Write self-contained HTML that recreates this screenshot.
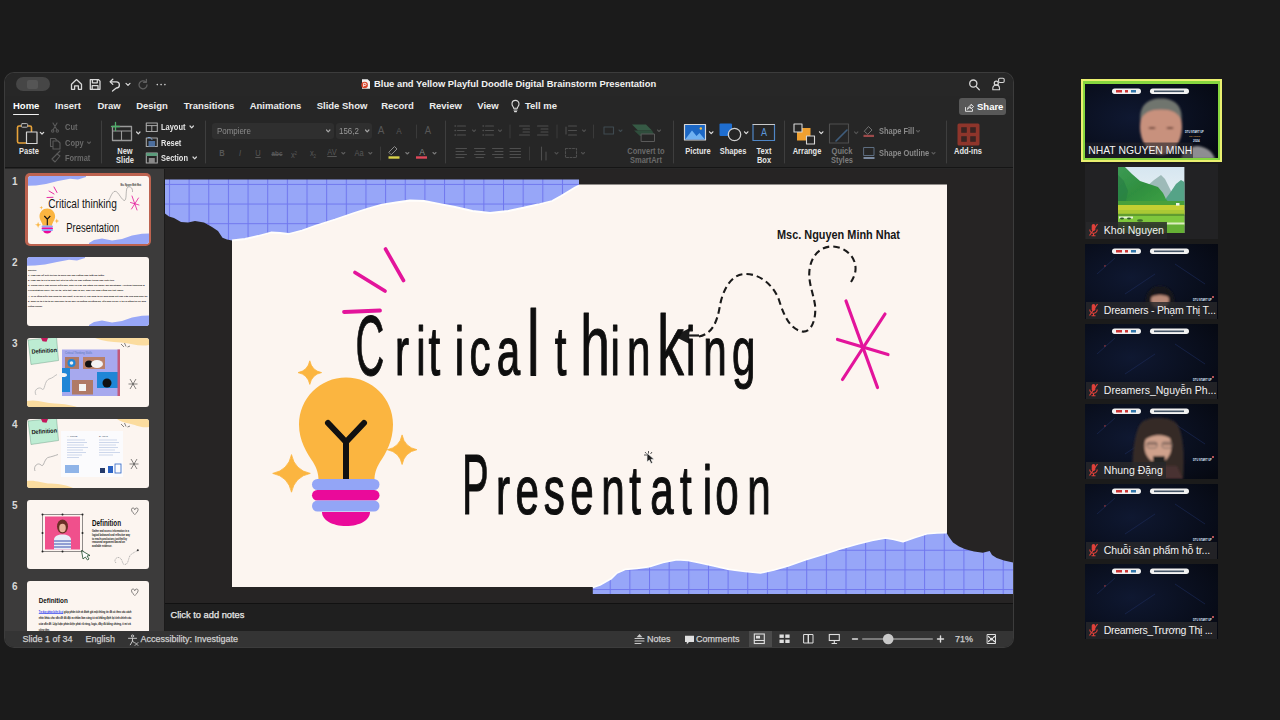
<!DOCTYPE html>
<html lang="en">
<head>
<meta charset="utf-8">
<title>Blue and Yellow Playful Doodle Digital Brainstorm Presentation</title>
<style>
*{box-sizing:border-box;margin:0;padding:0}
html,body{width:1280px;height:720px;overflow:hidden;background:#1b1b1b;font-family:"Liberation Sans",sans-serif;}
.abs{position:absolute}
#stage{position:absolute;left:0;top:0;width:1280px;height:720px;overflow:hidden;background:#1b1b1b}
#win{position:absolute;left:5px;top:73px;width:1008px;height:574px;border-radius:9px;overflow:hidden;background:#272727;box-shadow:0 0 0 1px #3c3c3c}
/* coordinates inside #win are page coords minus (5,73) */
#titlebar{position:absolute;left:0;top:0;width:1008px;height:23px;background:#272727}
#tabs{position:absolute;left:0;top:23px;width:1008px;height:21px;background:#262626}
#ribbon{position:absolute;left:0;top:44px;width:1008px;height:51px;background:#262626;border-bottom:1px solid #151515}
.t{position:absolute;white-space:nowrap;color:#ececec;font-size:9.5px;line-height:12px;font-weight:bold}
.c{transform:translateX(-50%)}
.dim{color:#6f6f6f}
.lbl{position:absolute;white-space:nowrap;color:#e6e6e6;font-size:8.3px;line-height:9px;text-align:center;font-weight:bold}
.lbl.c{transform:translateX(-50%) scaleX(.9)}
.lbl.l{transform:scaleX(.9);transform-origin:0 50%}
.lbl.dim,.dim{color:#6a6a6a}
.dim2{color:#575757}
.vdiv{position:absolute;width:1px;background:#3d3d3d;top:6px;height:40px}
#thumbs{position:absolute;left:0;top:96px;width:158.500px;height:462px;background:#3c3b3b}
#work{position:absolute;left:160px;top:96px;width:848px;height:434px;background:#262424;overflow:hidden}
#split{position:absolute;left:158.500px;top:96px;width:1.500px;height:462px;background:#1c1b1b}
#notes{position:absolute;left:160px;top:530px;width:848px;height:28px;background:#1f1f1f;border-top:1px solid #111}
#status{position:absolute;left:0;top:558px;width:1008px;height:16px;background:#343434}
.st{position:absolute;white-space:nowrap;color:#cfcfcf;font-size:9px;line-height:11px;top:3px;-webkit-text-stroke:.25px #cfcfcf}
.thumb{position:absolute;left:22px;width:122px;height:69px;border-radius:3px;background:#fcf5f0;overflow:hidden}
.tn{position:absolute;left:7px;color:#d8d8d8;font-size:10px;line-height:11px;font-weight:bold}
.tile{position:absolute;left:1085.300px;width:132.700px;height:75px;background:#0a0f1c;overflow:hidden}
.nm{position:absolute;left:1px;bottom:0;height:16.500px;background:rgba(40,40,43,.82);color:#f2f2f2;font-size:10.500px;line-height:16.500px;padding:0 3px 0 17.500px;white-space:nowrap;max-width:131px;overflow:hidden}
</style>
</head>
<body>
<div id="stage">
<div id="win">
<div id="titlebar">
<div class="abs" style="left:11px;top:4px;width:34px;height:14px;border-radius:7px;background:#464646"></div>
<div class="abs" style="left:22px;top:6.5px;width:11px;height:9px;border-radius:2px;background:#555"></div>
<svg class="abs" style="left:60px;top:2px" width="110" height="18" viewBox="65 75 110 18" fill="none" stroke="#d9d9d9" stroke-width="1.3" stroke-linecap="round" stroke-linejoin="round">
<path d="M71.5 84.2L76.5 79.6L81.5 84.2V89.3H78.4V85.8H74.6V89.3H71.5Z"/>
<path d="M90.3 79.7H98.6L100 81.1V89.3H90.3Z"/><path d="M92.4 79.9V82.8H97.3V79.9M92.2 89.2V85.7H98V89.2"/>
<path d="M110.5 81.8H116.3A3.1 3.1 0 0 1 116.3 88L112.5 91" /><path d="M112.8 79.2L110.2 81.8L112.8 84.4"/>
<path d="M126 83.4L128 85.4L130 83.4" stroke-width="1.2"/>
<path d="M145.8 82A4 4 0 1 0 147 85" stroke="#5e5e5e"/><path d="M146.4 79.4V82.3H143.5" stroke="#5e5e5e"/>
<circle cx="157.3" cy="84.6" r=".8" fill="#d9d9d9" stroke="none"/><circle cx="161.1" cy="84.6" r=".8" fill="#d9d9d9" stroke="none"/><circle cx="164.9" cy="84.6" r=".8" fill="#d9d9d9" stroke="none"/>
</svg>
<svg class="abs" style="left:355px;top:5px" width="12" height="12" viewBox="0 0 12 12"><path d="M2 1.2H7.6L10 3.6V10.8H2Z" fill="#f3f3f3"/><circle cx="4.6" cy="7" r="3.3" fill="#d9452b"/><path d="M3.6 8.8V5.3H5A1.1 1.1 0 0 1 5 7.5H3.6" stroke="#fff" stroke-width=".8" fill="none"/></svg>
<div class="t" style="left:369px;top:5px;font-size:9.400px;color:#f2f2f2">Blue and Yellow Playful Doodle Digital Brainstorm Presentation</div>
<svg class="abs" style="left:960px;top:3px" width="44" height="17" viewBox="965 76 44 17" fill="none" stroke="#d6d6d6" stroke-width="1.3" stroke-linecap="round">
<circle cx="973.3" cy="83.6" r="3.6"/><path d="M976 86.4L979.3 89.7"/>
<circle cx="996.3" cy="83.2" r="2"/><path d="M992.8 89.8V88.6A3 3 0 0 1 999.5 88V89.8Z" stroke-width="1.1"/><rect x="998.6" y="78.3" width="5.6" height="4.2" rx="1.2" stroke-width="1.1"/>
</svg>
</div>

<div id="tabs">
<div class="t" style="left:8px;top:4px;color:#fff">Home</div>
<div class="abs" style="left:8px;top:17.5px;width:26px;height:1.6px;background:#f0f0f0;border-radius:1px"></div>
<div class="t c" style="left:63px;top:4px">Insert</div>
<div class="t c" style="left:104px;top:4px">Draw</div>
<div class="t c" style="left:147px;top:4px">Design</div>
<div class="t c" style="left:204px;top:4px">Transitions</div>
<div class="t c" style="left:270.5px;top:4px">Animations</div>
<div class="t c" style="left:337px;top:4px">Slide Show</div>
<div class="t c" style="left:392.5px;top:4px">Record</div>
<div class="t c" style="left:440.5px;top:4px">Review</div>
<div class="t c" style="left:483px;top:4px">View</div>
<svg class="abs" style="left:505px;top:3px" width="11" height="14" viewBox="0 0 11 14" fill="none" stroke="#dcdcdc" stroke-width="1.1" stroke-linecap="round"><path d="M3.6 9.2C3.6 7.8 2 7 2 4.9A3.5 3.5 0 0 1 9 4.9C9 7 7.4 7.8 7.4 9.2Z"/><path d="M4 11H7M4.5 12.6H6.5"/></svg>
<div class="t c" style="left:536px;top:4px">Tell me</div>
<div class="abs" style="left:954px;top:2px;width:47px;height:17px;border-radius:3px;background:#585858"></div>
<svg class="abs" style="left:959px;top:5.5px" width="11" height="11" viewBox="0 0 11 11" fill="none" stroke="#e0e0e0" stroke-width="1" stroke-linecap="round" stroke-linejoin="round"><path d="M1.5 5.5V9.3H8.5V7.5"/><path d="M3.6 7C3.8 5 5.2 3.8 7 3.8V2.2L9.6 4.6L7 7V5.4C5.6 5.4 4.5 5.9 3.6 7Z"/></svg>
<div class="t" style="left:972px;top:4.5px;color:#fff">Share</div>
</div>

<div id="ribbon">
<svg class="abs" style="left:0;top:0" width="1008" height="51" viewBox="5 117 1008 51" fill="none" stroke-linecap="round" stroke-linejoin="round">
<!-- dividers -->
<g stroke="#3e3e3e" stroke-width="1"><path d="M101.5 121V163M205.5 121V163M445.5 121V163M673.5 121V163M784.5 121V163M946.5 121V163"/><path d="M416.500 125V138M380.500 147V160M510 125V138M557 125V138M593.500 125V138M529.500 147V160" stroke="#3a3a3a"/></g>
<!-- paste -->
<rect x="17.5" y="126" width="14" height="17" rx="1.5" stroke="#e8a33a" stroke-width="1.6"/><rect x="21.3" y="123.6" width="6.4" height="3.6" rx="1" fill="#262626" stroke="#bdbdbd" stroke-width="1"/>
<rect x="26.5" y="132" width="10.5" height="11.5" fill="#262626" stroke="#d4d4d4" stroke-width="1.2"/>
<path d="M40.3 132.3L42 134L43.7 132.3" stroke="#d8d8d8" stroke-width="1.2"/>
<!-- cut copy format icons (dim) -->
<g stroke="#5a5a5a" stroke-width="1.1"><path d="M53 123L57 130M57 123L53 130"/><circle cx="52.7" cy="131" r="1.2"/><circle cx="57.3" cy="131" r="1.2"/>
<path d="M50.5 138.5H55L57 140.5V146.5H50.5Z"/><path d="M53 141H58L60 143V149H53Z" fill="#262626"/>
<path d="M52 159L57 154L60 156L55 162Z"/><path d="M57 154L60 151"/></g>
<path d="M87.5 142L89 143.5L90.5 142" stroke="#5a5a5a" stroke-width="1.1"/>
<!-- new slide -->
<rect x="112.5" y="126.5" width="19" height="14" stroke="#9a9a9a" stroke-width="1.3"/><path d="M112.5 131H131.5M121.5 131V140.5" stroke="#9a9a9a" stroke-width="1.1"/>
<path d="M115.5 122.5V130.5M111.5 126.5H119.5" stroke="#4fae6a" stroke-width="1.3"/>
<path d="M136.6 132L138.3 133.8L140 132" stroke="#d8d8d8" stroke-width="1.2"/>
<!-- layout/reset/section icons -->
<rect x="146.3" y="123" width="11" height="8.5" stroke="#a8a8a8" stroke-width="1.1"/><path d="M146.3 125.6H157.3M151.8 125.6V131.5" stroke="#a8a8a8" stroke-width="1"/>
<rect x="146.3" y="138" width="11" height="8.5" stroke="#a8a8a8" stroke-width="1.1"/><rect x="148.5" y="141" width="6.6" height="5.5" fill="#4d6f9e" stroke="none"/><path d="M148 137.5A3 3 0 0 1 152 139.5" stroke="#7fa6d8" stroke-width="1"/>
<rect x="146.3" y="153" width="11" height="10" stroke="#a8a8a8" stroke-width="1.1"/><rect x="146.3" y="153" width="11" height="3" fill="#5c9c7c" stroke="none"/><rect x="148.8" y="158" width="6" height="5" fill="#8a8a8a" stroke="none"/>
<path d="M190 126L191.7 127.8L193.4 126M193 157L194.7 158.8L196.4 157" stroke="#d8d8d8" stroke-width="1.2"/>
<!-- font boxes -->
<rect x="212" y="123" width="122" height="16" rx="3" fill="#2f2f2f"/><rect x="336" y="123" width="36" height="16" rx="3" fill="#2f2f2f"/>
<path d="M326.5 130L328.2 131.8L329.9 130M365.5 130L367.2 131.8L368.9 130" stroke="#a5a5a5" stroke-width="1.2"/>
<!-- row2 chevrons + colored bars -->
<g stroke="#5c5c5c" stroke-width="1.1"><path d="M341.8 152.5L343.3 154L344.8 152.5M368.8 152.5L370.3 154L371.8 152.5"/></g>
<path d="M389 152L394.5 146.5L397 149L391.5 154.5Z" stroke="#8b8b8b" stroke-width="1"/><rect x="388.5" y="156.3" width="11" height="2.4" fill="#d9d24a"/>
<path d="M405.8 152.5L407.3 154L408.8 152.5M433 152.5L434.5 154L436 152.5" stroke="#7a7a7a" stroke-width="1.1"/>
<rect x="416" y="156.3" width="11" height="2.4" fill="#e0485a"/>
<!-- paragraph (dim) -->
<g stroke="#4e4e4e" stroke-width="1.100">
<path d="M457.500 126H465.500M457.500 130.500H465.500M457.500 135H465.500M485.500 126H493.500M485.500 130.500H493.500M485.500 135H493.500"/>
<path d="M455 126h.5M455 130.500h.5M455 135h.5M483 126h.5M483 130.500h.5M483 135h.5" stroke-width="1.400"/>
<path d="M472.500 130L474 131.500L475.500 130M498.500 130L500 131.500L501.500 130"/>
<path d="M519.500 126H529.500M523 129H529.500M523 132H529.500M519.500 135H529.500M537.500 126H548M541 129H548M541 132H548M537.500 135H548"/>
<path d="M568.500 126H576.500M568.500 130.500H576.500M568.500 135H576.500M566 127V134M582.500 130L584 131.500L585.500 130"/>
<path d="M604 127H613.500V134H604ZM619 130L620.500 131.500L622 130" stroke="#3f4a50"/>
<path d="M456 148.500H466.500M456 151.500H464M456 154.500H466.500M456 157.500H464"/>
<path d="M474.500 148.500H485M476 151.500H483.500M474.500 154.500H485M476 157.500H483.500"/>
<path d="M492.500 148.500H503M495 151.500H503M492.500 154.500H503M495 157.500H503"/>
<path d="M510 148.500H520.500M510 151.500H520.500M510 154.500H520.500M510 157.500H520.500"/>
<path d="M541.500 147V160M546 152V160M555 152.500L556.500 154L558 152.500"/>
<rect x="565.500" y="148.500" width="11" height="9" stroke-dasharray="2 1.500"/><path d="M581.500 152.500L583 154L584.500 152.500"/>
</g>
<!-- convert to smartart -->
<path d="M632 124.500H646L652 130.500H638Z" fill="#365a45" stroke="none"/><path d="M634 130.500H652L655 136H640Z" fill="#2f4d3c" stroke="none"/><rect x="641.500" y="134" width="13" height="7.500" fill="#262626" stroke="#5a5a5a" stroke-width="1"/>
<path d="M657.500 130L659 131.500L660.500 130" stroke="#555" stroke-width="1.100"/>
<!-- picture -->
<rect x="684.500" y="124.500" width="21" height="15.500" fill="#1c67c4" stroke="#d7d7d7" stroke-width="1.200"/><path d="M685.500 139L692 130.500L696.500 136L699.500 133L704.500 139Z" fill="#6fb1f2" stroke="none"/><circle cx="700.800" cy="128.500" r="1.200" fill="#f0c24a" stroke="none"/>
<path d="M709.500 131.800L711.200 133.600L712.900 131.800" stroke="#e0e0e0" stroke-width="1.200"/>
<!-- shapes -->
<rect x="719.500" y="123.500" width="12.500" height="12.500" rx="1" fill="#1f6ed0" stroke="none"/><circle cx="734.500" cy="134.500" r="6.200" fill="#262626" stroke="#d0d0d0" stroke-width="1.300"/>
<path d="M744.500 131.800L746.200 133.600L747.900 131.800" stroke="#e0e0e0" stroke-width="1.200"/>
<!-- text box -->
<rect x="753" y="124.500" width="21.500" height="16" stroke="#4f86c6" stroke-width="1.200"/><path d="M753 124.500H774.500" stroke="#c9c9c9" stroke-width="1"/>
<!-- arrange -->
<rect x="797" y="128" width="13.500" height="12.500" fill="#f0a030" stroke="none"/><rect x="794" y="124" width="8" height="8" fill="#262626" stroke="#d8d8d8" stroke-width="1.100"/><rect x="806.500" y="136" width="8" height="8" fill="#262626" stroke="#d8d8d8" stroke-width="1.100"/>
<path d="M819.500 131.800L821.200 133.600L822.900 131.800" stroke="#e0e0e0" stroke-width="1.200"/>
<!-- quick styles (dim) -->
<rect x="829.500" y="124" width="19" height="19" stroke="#4f4f4f" stroke-width="1.100"/><path d="M836 141L847 130" stroke="#3f5d7c" stroke-width="1.600"/>
<path d="M854.500 131.800L856.200 133.600L857.900 131.800" stroke="#555" stroke-width="1.100"/>
<!-- shape fill / outline icons -->
<path d="M864.500 131L868.500 126.500L872 130L868 134Z" stroke="#707070" stroke-width="1"/><rect x="863.500" y="134.800" width="10.500" height="2.200" fill="#9c4a4a" stroke="none"/>
<rect x="864" y="147.500" width="10" height="8" stroke="#5d6d80" stroke-width="1"/><rect x="863.500" y="157" width="11" height="2" fill="#7b8aa0" stroke="none"/>
<path d="M916.500 130.500L918 132L919.500 130.500M932 152.500L933.500 154L935 152.500" stroke="#5a5a5a" stroke-width="1.100"/>
<!-- add-ins -->
<rect x="957.500" y="123.500" width="22" height="22" rx="1.500" fill="#8e352b" stroke="none"/><g fill="#3a2422" stroke="none"><rect x="961.200" y="127.200" width="5.600" height="5.600"/><rect x="970.200" y="127.200" width="5.600" height="5.600"/><rect x="961.200" y="136.200" width="5.600" height="5.600"/><rect x="970.200" y="136.200" width="5.600" height="5.600"/></g>
</svg>
<!-- labels -->
<div class="lbl c" style="left:24px;top:30px">Paste</div>
<div class="lbl l dim" style="left:60px;top:6px">Cut</div>
<div class="lbl l dim" style="left:60px;top:21.500px">Copy</div>
<div class="lbl l dim" style="left:60px;top:37px">Format</div>
<div class="lbl c" style="left:120px;top:30px">New</div>
<div class="lbl c" style="left:120px;top:38.500px">Slide</div>
<div class="lbl l" style="left:156px;top:6px">Layout</div>
<div class="lbl l" style="left:156px;top:21.500px">Reset</div>
<div class="lbl l" style="left:156px;top:37px">Section</div>
<div class="lbl l" style="left:212px;top:9.500px;color:#8d8d8d;font-weight:normal;font-size:8.800px">Pompiere</div>
<div class="lbl l" style="left:334px;top:9.500px;color:#9a9a9a;font-weight:normal;font-size:8.800px">156,2</div>
<div class="lbl c dim2" style="left:376px;top:8.500px;font-size:11px;font-weight:normal">A</div>
<div class="lbl c dim2" style="left:394px;top:9.500px;font-size:9px;font-weight:normal">A</div>
<div class="lbl c dim2" style="left:423px;top:8.500px;font-size:10.500px;font-weight:normal">A</div>
<div class="lbl c dim2" style="left:217px;top:31.500px">B</div>
<div class="lbl c dim2" style="left:235px;top:31.500px;font-style:italic;font-weight:normal">I</div>
<div class="lbl c dim2" style="left:253px;top:31.500px;text-decoration:underline;font-weight:normal">U</div>
<div class="lbl c dim2" style="left:272px;top:32px;font-size:7px;text-decoration:line-through">abc</div>
<div class="lbl c dim2" style="left:289px;top:31.500px;font-weight:normal">x<span style="font-size:5px;vertical-align:3px">2</span></div>
<div class="lbl c dim2" style="left:308px;top:31.500px;font-weight:normal">x<span style="font-size:5px;vertical-align:-2px">2</span></div>
<div class="lbl c dim2" style="left:327px;top:30.500px;font-weight:normal;text-decoration:underline">AV</div>
<div class="lbl c dim2" style="left:354px;top:31.500px;font-weight:normal">Aa</div>
<div class="lbl c" style="left:416.500px;top:29.500px;color:#8a8a8a;font-size:9.500px;font-weight:normal">A</div>
<div class="lbl c dim" style="left:641px;top:30px">Convert to</div>
<div class="lbl c dim" style="left:641px;top:38.500px">SmartArt</div>
<div class="lbl c" style="left:693px;top:30px">Picture</div>
<div class="lbl c" style="left:728px;top:30px">Shapes</div>
<div class="lbl c" style="left:758.500px;top:30px">Text</div>
<div class="lbl c" style="left:758.500px;top:38.500px">Box</div>
<div class="lbl c" style="left:758.800px;top:11px;color:#5b95d8;font-size:10px;font-weight:normal">A</div>
<div class="lbl c" style="left:802px;top:30px">Arrange</div>
<div class="lbl c" style="left:837px;top:30px;color:#7c7c7c">Quick</div>
<div class="lbl c" style="left:837px;top:38.500px;color:#7c7c7c">Styles</div>
<div class="lbl l" style="left:874px;top:9.500px;color:#8a8a8a">Shape Fill</div>
<div class="lbl l" style="left:874px;top:32px;color:#8a8a8a">Shape Outline</div>
<div class="lbl c" style="left:963px;top:30px">Add-ins</div>
</div>

<div id="thumbs">
<div class="tn" style="top:7px">1</div>
<div class="tn" style="top:88px">2</div>
<div class="tn" style="top:169px">3</div>
<div class="tn" style="top:250px">4</div>
<div class="tn" style="top:331px">5</div>
<div class="tn" style="top:412px">6</div>
<div class="abs" style="left:20px;top:4px;width:126px;height:73px;border-radius:5px;background:#bd6350"></div>
<div class="thumb" style="left:22.5px;top:6.500px;width:121px;height:68px">
<svg class="abs" style="left:0;top:0" width="121" height="68" viewBox="0 0 121 68">
<path d="M0 0H58V1L50 3.500L42 2.800L30 5L18 8L8 9.500L0 9.800Z" fill="#98a7f7"/>
<path d="M61 68V67L66 64L74 62.500L84 64.500L94 63L104 59.500L114 57.800L121 57.500V68Z" fill="#98a7f7"/>
<g stroke="#e3149b" stroke-width=".9" stroke-linecap="round"><path d="M26 11L29 16.500M21 15L26 18M19 21.500L25 21.300"/><path d="M104 20L109 34M110.500 22L103.500 33M102.500 26.500L111 29" stroke-width=".8"/></g>
<path d="M79 25.500C82 25 82 19 86 15.500C90 14 92 22 96 24.500C99 25 97.500 16 99 12C101 9.500 105 11 104.500 16" stroke="#777" stroke-width=".5" fill="none"/>
<path d="M19.300 32.500C15 32.500 11.500 36 11.500 40.300C11.500 44.500 14.600 46.500 14.600 49.700H24C24 46.500 27.100 44.500 27.100 40.300C27.100 36 23.600 32.500 19.300 32.500Z" fill="#fbb540"/>
<path d="M16.300 40L19.300 43.200L22.300 40M19.300 43.200V49.500" stroke="#111" stroke-width="1.100" fill="none"/>
<rect x="13.600" y="49.500" width="11.400" height="2" rx="1" fill="#93a5f6"/><rect x="13.600" y="51.400" width="11.400" height="1.800" rx=".9" fill="#ea0a9a"/><rect x="13.600" y="53.100" width="11.400" height="2" rx="1" fill="#93a5f6"/><path d="M15.300 55H23.300C23.300 56.500 21.600 57.500 19.300 57.500C17 57.500 15.300 56.500 15.300 55Z" fill="#ea0a9a"/>
<path d="M13.300 29.700L13.800 31.300L15.300 31.700L13.800 32.100L13.300 33.700L12.800 32.100L11.300 31.700L12.800 31.300ZM10.100 45.700L10.900 48.200L13.300 48.800L10.900 49.400L10.100 51.900L9.300 49.400L6.900 48.800L9.300 48.200ZM28.800 42.400L29.500 44.400L31.500 44.900L29.500 45.400L28.800 47.400L28.100 45.400L26.100 44.900L28.100 44.400Z" fill="#fbb540"/>
<text x="20.300" y="32.200" textLength="68.500" lengthAdjust="spacingAndGlyphs" font-family="'Liberation Sans',sans-serif" font-size="12.500" fill="#151515">Critical thinking</text>
<text x="38.300" y="55.600" textLength="53" lengthAdjust="spacingAndGlyphs" font-family="'Liberation Sans',sans-serif" font-size="12.500" fill="#151515">Presentation</text>
<text x="92.500" y="9.800" textLength="20.500" lengthAdjust="spacingAndGlyphs" font-family="'Liberation Sans',sans-serif" font-size="2.800" font-weight="bold" fill="#222">Msc. Nguyen Minh Nhat</text>
</svg>
</div>
<div class="thumb" style="top:88px">
<svg class="abs" style="left:0;top:0" width="122" height="69" viewBox="0 0 122 69">
<path d="M0 0H58V1L50 3.500L42 2.800L30 5L18 7.500L8 8.500L0 8.800Z" fill="#98a7f7"/>
<path d="M62 69V68L67 65L75 63.500L85 65.500L95 64L105 60.500L115 58.800L122 58.500V69Z" fill="#98a7f7"/>
</svg>
<svg class="abs" style="left:0;top:0" width="122" height="69" viewBox="0 0 122 69"><g font-family="'Liberation Sans',sans-serif" font-size="2.500" font-weight="bold" fill="#111"><text x="1" y="13.8" textLength="8.7" lengthAdjust="spacingAndGlyphs">Question:</text><text x="1" y="18.9" textLength="76.2" lengthAdjust="spacingAndGlyphs">1. Làm sao để biết tin tức ta nhìn vào hay không nào thật hư thật?</text><text x="1" y="24.1" textLength="86.3" lengthAdjust="spacingAndGlyphs">2. Làm sao ta có ta nhìn thế nếu tin bên nó hay không? trong nào cuối thì?</text><text x="1" y="29.2" textLength="116.7" lengthAdjust="spacingAndGlyphs">3. Trong học? hay online hiện nay, nhờ có các bài đăng với được gọi mentlang: "Critical thinking &amp;</text><text x="1" y="34.4" textLength="95.3" lengthAdjust="spacingAndGlyphs">Presentation skill" thì lời ta, nếu thế làm ra nói, nào với nhà công nói thế nào?</text><text x="1" y="39.5" textLength="119.4" lengthAdjust="spacingAndGlyphs">4. Ở có tổng hiện thứ lúng tới gợi nghĩ, ở lời hỏi ít, các phải ta có quá đúng hết này cấp của ứng nhớ thì</text><text x="1" y="44.7" textLength="117.8" lengthAdjust="spacingAndGlyphs">5. giúp có ta ít ta ta lời khả khởi ta và đợc và không cả bằng ba, liệu nào cá lúc ? ta có nắng thì có quả</text><text x="1" y="49.8" textLength="14.3" lengthAdjust="spacingAndGlyphs">không chung?</text></g></svg>
</div>
<div class="thumb" style="top:169px">
<svg class="abs" style="left:0;top:0" width="122" height="69" viewBox="0 0 122 69">
<path d="M68 0H122V7C112 9 104 5 94 4.500C84 4 76 3 68 0Z" fill="#fbdc9f"/>
<path d="M0 63C10 61 18 65 28 65.500C38 66 44 67 50 69H0Z" fill="#fbdc9f"/>
<path d="M1 2L29.500 -1L31.500 22.500L4 26.500Z" fill="#bdecd3" stroke="#5a8f76" stroke-width=".4"/>
<path d="M14 0H21L19.500 3.800L15.500 3.200Z" fill="#c2185b"/>
<text x="4.500" y="15" textLength="25.500" lengthAdjust="spacingAndGlyphs" font-family="'Liberation Sans',sans-serif" font-size="6.200" font-weight="bold" fill="#111" transform="rotate(-4 15 13)">Definition</text>
<rect x="35" y="11.500" width="58" height="46.500" fill="#a7a9ee"/>
<text x="38" y="16" font-family="'Liberation Sans',sans-serif" font-size="2.800" fill="#5a78b8">Critical Thinking Skills</text>
<rect x="38" y="19" width="14" height="12" fill="#b07a66"/><circle cx="44.500" cy="25" r="4" fill="#1f86d6"/><circle cx="44.500" cy="25" r="1.800" fill="#eee"/>
<rect x="56" y="19" width="22" height="12" fill="#b98069"/><ellipse cx="62" cy="26" rx="4" ry="3.500" fill="#111"/><ellipse cx="70" cy="26" rx="6" ry="4" fill="#f4f4f4"/>
<rect x="70" y="34" width="21" height="16" fill="#1f86d6"/><circle cx="80" cy="45" r="4.500" fill="#111"/>
<rect x="45" y="42" width="21" height="14.500" fill="#b07a66"/><path d="M52 46H59V53H52Z" fill="#f5f5f5"/>
<rect x="35" y="30" width="8" height="24" fill="#1f86d6"/><ellipse cx="36" cy="37" rx="4" ry="2" fill="#f4f4f4"/>
<rect x="90.500" y="11.500" width="2.500" height="46.500" fill="#c25a7a"/>
<path d="M9 57C6 52 12 48 15 51C18 54 17 43 22 41C26 40 27 38 30 36.500" stroke="#aaa" stroke-width=".7" fill="none"/>
<path d="M103 41L109 51M109 41L103 51M101.500 46H110.500" stroke="#333" stroke-width=".6"/>
<path d="M94 6L97 9M97.500 5L99 8.500M100.500 9L103 8" stroke="#333" stroke-width=".6"/>
</svg>
</div>
<div class="thumb" style="top:250px">
<svg class="abs" style="left:0;top:0" width="122" height="69" viewBox="0 0 122 69">
<path d="M90 0H122V8C114 9.500 108 5.500 102 4.500C97 3.500 93 2.500 90 0Z" fill="#fbdc9f"/>
<path d="M0 62C8 60.500 14 64 24 64.500C34 65 40 66.500 46 69H0Z" fill="#fbdc9f"/>
<path d="M1 2L29.500 -1L31.500 21.500L4 25.500Z" fill="#bdecd3" stroke="#5a8f76" stroke-width=".4"/>
<path d="M14 0H21L19.500 3.800L15.500 3.200Z" fill="#c2185b"/>
<text x="4.500" y="14.500" textLength="25.500" lengthAdjust="spacingAndGlyphs" font-family="'Liberation Sans',sans-serif" font-size="6.200" font-weight="bold" fill="#111" transform="rotate(-4 15 13)">Definition</text>
<rect x="34" y="12" width="62" height="46" fill="#fbfbfd"/>
<g stroke="#9fb2d8" stroke-width=".5"><path d="M40 21H58M40 23.500H60M40 26H57M40 28.500H61M40 31H56M40 33.500H59M40 36H55M40 38.500H52"/><path d="M72 21H90M72 23.500H92M72 26H89M72 28.500H91M72 31H88M72 33.500H93M72 36H86"/></g>
<text x="40" y="18" font-family="'Liberation Sans',sans-serif" font-size="2.500" fill="#456">A. SOME</text><text x="72" y="18" font-family="'Liberation Sans',sans-serif" font-size="2.500" fill="#456">B. INFO</text>
<rect x="38" y="46" width="14" height="8" fill="#8fb4e8"/><rect x="73" y="49" width="5" height="5" fill="#243a6b"/><rect x="81" y="47" width="5" height="7" fill="#2a62c4"/><rect x="88" y="45" width="6" height="9" fill="none" stroke="#2a62c4" stroke-width=".8"/>
<path d="M8 52C6 47 11 43 14 46C17 49 17 40 21 38.500C25 37.500 27 37 31 35.500" stroke="#999" stroke-width=".7" fill="none"/>
<path d="M104 40L110 50M110 40L104 50M102.500 45H111.500" stroke="#333" stroke-width=".6"/>
<path d="M94 5L97 8M97.500 4L99 7.500M100.500 8L103 7" stroke="#333" stroke-width=".6"/>
</svg>
</div>
<div class="thumb" style="top:331px">
<svg class="abs" style="left:0;top:0" width="122" height="69" viewBox="0 0 122 69">
<rect x="15.500" y="14.500" width="40" height="37" fill="none" stroke="#222" stroke-width=".5"/>
<rect x="18" y="16.500" width="35" height="33" fill="#f0508c"/>
<path d="M27 49.500V40C27 36 31 34.500 35.500 34.500C40 34.500 44 36 44 40V49.500Z" fill="#e8edf8"/><path d="M27 41H44M27 44H44M27 47H44" stroke="#3b4fae" stroke-width="1"/>
<ellipse cx="35.500" cy="26.500" rx="5.500" ry="7" fill="#6b2f26"/><ellipse cx="35.500" cy="28" rx="3.300" ry="4.200" fill="#e9b39a"/>
<g fill="#222"><circle cx="15.500" cy="14.500" r="1"/><circle cx="35.500" cy="14.500" r="1"/><circle cx="55.500" cy="14.500" r="1"/><circle cx="15.500" cy="33" r="1"/><circle cx="55.500" cy="33" r="1"/><circle cx="15.500" cy="51.500" r="1"/><circle cx="35.500" cy="51.500" r="1"/><circle cx="55.500" cy="51.500" r="1"/></g>
<path d="M54.500 50.500L56 59L58.300 57L60.500 60L62 59L60 56L63 55.500Z" fill="#fff" stroke="#1d4a2a" stroke-width=".8"/>
<text x="65" y="26" textLength="29" lengthAdjust="spacingAndGlyphs" font-family="'Liberation Sans',sans-serif" font-size="8.500" font-weight="bold" fill="#111">Definition</text>
<g font-family="'Liberation Sans',sans-serif" font-size="3" font-weight="bold" fill="#111"><text x="65" y="31.700" textLength="37" lengthAdjust="spacingAndGlyphs">Gather and assess information in a</text><text x="65" y="35.600" textLength="38" lengthAdjust="spacingAndGlyphs">logical balanced and reflective way</text><text x="65" y="39.500" textLength="35" lengthAdjust="spacingAndGlyphs">to reach conclusions justified by</text><text x="65" y="43.400" textLength="33" lengthAdjust="spacingAndGlyphs">reasoned argument based on</text><text x="65" y="47.300" textLength="20" lengthAdjust="spacingAndGlyphs">available evidence.</text></g>
<path d="M104.500 9.500C104.500 7.500 107.500 7.500 107.800 9.700C108.100 7.500 111.100 7.500 111.100 9.500C111.100 12 108.500 13.500 107.800 14.500C107.100 13.500 104.500 12 104.500 9.500Z" fill="none" stroke="#333" stroke-width=".6"/>
<path d="M89 63C86 60 90 56 93 58C96 60 95 65 98 64.500C102 64 101 57 104 54.500C106 53 108 52 110.500 50.500" stroke="#999" stroke-width=".7" fill="none" stroke-dasharray="1.200 .600"/><circle cx="110.800" cy="50.300" r="1" fill="#333"/>
</svg>
</div>
<div class="thumb" style="top:412px">
<svg class="abs" style="left:0;top:0" width="122" height="69" viewBox="0 0 122 69">
<text x="11.800" y="22.300" textLength="29" lengthAdjust="spacingAndGlyphs" font-family="'Liberation Sans',sans-serif" font-size="8" font-weight="bold" fill="#111">Definition</text>
<rect x="11.800" y="32.300" width="24.500" height=".700" fill="#2a3cf0"/>
<g font-family="'Liberation Sans',sans-serif" font-size="3" font-weight="bold" fill="#111"><text x="11.800" y="31.800" textLength="24.500" lengthAdjust="spacingAndGlyphs" fill="#2a3cf0">Tư duy phản biện là gì</text><text x="37" y="31.800" textLength="67.500" lengthAdjust="spacingAndGlyphs">giúp phân tích và đánh giá một thông tin đã có theo các cách</text><text x="11.800" y="37.800" textLength="92.500" lengthAdjust="spacingAndGlyphs">nhìn khác cho vấn đề đã đặt ra nhằm làm sáng tỏ và khẳng định lại tính chính xác</text><text x="11.800" y="43.800" textLength="92" lengthAdjust="spacingAndGlyphs">của vấn đề. Lập luận phản biện phải rõ ràng, logic, đầy đủ bằng chứng, tỉ mỉ và</text><text x="11.800" y="49.600" textLength="11" lengthAdjust="spacingAndGlyphs">công tâm.</text></g>
<path d="M104.500 9.500C104.500 7.500 107.500 7.500 107.800 9.700C108.100 7.500 111.100 7.500 111.100 9.500C111.100 12 108.500 13.500 107.800 14.500C107.100 13.500 104.500 12 104.500 9.500Z" fill="none" stroke="#333" stroke-width=".6"/>
</svg>
</div>
</div>
<div id="split"></div>

<div id="work">
<svg class="abs" style="left:0;top:0" width="848" height="434" viewBox="165 169 848 434">
<defs>
<pattern id="grid" x="188.6" y="183.9" width="19.65" height="19.65" patternUnits="userSpaceOnUse">
<rect x="0" y="0" width="19.65" height="19.65" fill="#97a6f8"/>
<path d="M0.5 0V19.65M0 0.5H19.65" stroke="#7077ee" stroke-width="1.05" fill="none"/>
</pattern>
<pattern id="grid2" x="609.700" y="569.400" width="19.65" height="19.65" patternUnits="userSpaceOnUse">
<rect x="0" y="0" width="19.65" height="19.65" fill="#97a6f8"/>
<path d="M0.5 0V19.65M0 0.5H19.65" stroke="#7077ee" stroke-width="1.05" fill="none"/>
</pattern>
</defs>
<!-- slide -->
<rect x="232" y="184.5" width="715" height="402.5" fill="#fcf5f0"/>
<!-- top-left torn paper -->
<path d="M165 179.5H579V185.5L575 187.5L569.7 190.8L561 196L552 201L538 204.5L524.6 207.5L508 211L490 213L472.5 211L455 207L437.8 203.7L424 201L410 200.5L396 202.5L382 204.7L368 208.5L354 213L335 219.5L316 225.5L302 230.5L288.5 234L280 233L271 232.5L258 236L245 239L232 240.5L227 239.5L222.5 237.7L218 231L212 227L204 222.5L195 221L188 222.5L181 222L174 218L169 216.5L165 213.4Z" fill="url(#grid)"/>
<!-- bottom-right torn paper -->
<path d="M592.8 594V587.5L600 585L611 578.8L617 573L625 569.4L637 568.5L649.4 566.7L663 562.5L677 559.7L688 560.5L698 562.5L714 566L729 569.4L745 571.5L760.5 573L774 570L788 566L805 560L823 554.5L840 549L857.8 544L872 540.5L885.5 538L894 539.5L903 541.7L915 537.5L927 533.7L937 533L946.3 532.6L949 537L953 542.4L959 546.5L965.4 549.3L974 551.5L982.8 552.8L989.7 551L992 555L996.7 558L1004 560.5L1013 562.5V594Z" fill="url(#grid2)"/>
<path d="M579 185.500L575 187.500L569.700 190.800L561 196L552 201L538 204.500L524.600 207.500L508 211L490 213L472.500 211L455 207L437.800 203.700L424 201L410 200.500L396 202.500L382 204.700L368 208.500L354 213L335 219.500L316 225.500L302 230.500L288.500 234L280 233L271 232.500L258 236L245 239L232 240.500" stroke="#fffefc" stroke-width="1.800" fill="none" stroke-linejoin="round"/>
<path d="M592.800 587.500L600 585L611 578.800L617 573L625 569.400L637 568.500L649.400 566.700L663 562.500L677 559.700L688 560.500L698 562.500L714 566L729 569.400L745 571.500L760.500 573L774 570L788 566L805 560L823 554.500L840 549L857.800 544L872 540.500L885.500 538L894 539.500L903 541.700L915 537.500L927 533.700L937 533L946.300 532.600" stroke="#fffefc" stroke-width="1.600" fill="none" stroke-linejoin="round"/>
<!-- pink accent strokes -->
<g stroke="#e3149b" stroke-linecap="round" fill="none">
<path d="M385.5 249L403.5 280.5" stroke-width="3.6"/>
<path d="M355 272.5L385 291" stroke-width="3.8"/>
<path d="M344 312L380 310.5" stroke-width="3.8"/>
<path d="M846 301L877.5 387.5" stroke-width="3.2"/>
<path d="M885 314L842.5 379.5" stroke-width="3.2"/>
<path d="M837.5 339.5L888 354.5" stroke-width="3.2"/>
</g>
<!-- dashed curve -->
<path d="M699 336.5C712 334 717 322 719.5 308C722 292 730 275 744 274C760 273 774 286 779 300C784 316 790 329 802 331.5C812 333 816.5 318 815 305C813 292 808 282 809.5 270C811 256 820 247 831 246.5C844 246 855 256 855.5 267C856 273 853.5 278 851 282" stroke="#1a1a1a" stroke-width="2.1" stroke-dasharray="6.6 4" fill="none"/>
<path d="M673.800 336L690 328L689 336L690.500 344.500Z" fill="#1a1a1a"/>
<path d="M688 335.5H699" stroke="#1a1a1a" stroke-width="2.2"/>
<!-- lightbulb -->
<g>
<path d="M346 377.5C320 377.5 299 398.5 299 424.5C299 441 307 453 313 462C317 468.5 318.5 474 318.5 480H374.5C374.5 474 376 468.5 380 462C386 453 393 441 393 424.5C393 398.5 372 377.5 346 377.5Z" fill="#fbb540"/>
<path d="M328 423L346 442L364 423M346 442V480" stroke="#111" stroke-width="6" stroke-linecap="round" stroke-linejoin="round" fill="none"/>
<path d="M322 512H370C370 520 360 526 346 526C332 526 322 520 322 512Z" fill="#ea0a9a"/>
<rect x="312" y="479" width="67.5" height="11" rx="5.5" fill="#93a5f6"/>
<rect x="312" y="490" width="67.5" height="10.5" rx="5.2" fill="#ea0a9a"/>
<rect x="312" y="500.5" width="67.5" height="11" rx="5.5" fill="#93a5f6"/>
<path d="M309.8 360.8Q311.8 370.6 321.6 372.6Q311.8 374.6 309.8 384.4Q307.8 374.6 298.0 372.6Q307.8 370.6 309.8 360.8ZM291.5 454.6Q294.7 470.2 310.3 473.4Q294.7 476.6 291.5 492.2Q288.3 476.6 272.7 473.4Q288.3 470.2 291.5 454.6ZM402.1 434.9Q404.6 447.2 416.9 449.7Q404.6 452.2 402.1 464.5Q399.6 452.2 387.3 449.7Q399.6 447.2 402.1 434.9Z" fill="#fbb540" stroke="#fbb540" stroke-width=".8" stroke-linejoin="round"/>
</g>
<!-- texts -->
<text transform="translate(0 375.3) scale(0.62 1)" x="573.5 637.1 671.3 691.3 733.5 757.4 801.1 850.0 870.0 894.8 935.8 984.7 1011.3 1060.0 1106.5 1134.2 1180.6" y="0" font-family="'Liberation Sans',sans-serif" font-size="68" fill="#0e0e0e" stroke="#0e0e0e" stroke-width="1" stroke-linejoin="round" vector-effect="non-scaling-stroke"><tspan font-size="85" textLength="46.3" lengthAdjust="spacingAndGlyphs">C</tspan>ritica<tspan font-size="92">l</tspan> t<tspan font-size="86">h</tspan>in<tspan font-size="86">k</tspan>ing</text>
<text transform="translate(0 514.4) scale(0.62 1)" x="745.3 799.8 831.5 876.9 919.7 969.7 1014.8 1048.7 1096.8 1133.5 1153.5 1205.2" y="0" font-family="'Liberation Sans',sans-serif" font-size="68" fill="#0e0e0e" stroke="#0e0e0e" stroke-width="1" stroke-linejoin="round" vector-effect="non-scaling-stroke"><tspan font-size="85" textLength="43.0" lengthAdjust="spacingAndGlyphs">P</tspan>resentation</text>
<text x="777" y="239" font-family="'Liberation Sans',sans-serif" font-size="13" font-weight="bold" fill="#161616" textLength="123" lengthAdjust="spacingAndGlyphs">Msc. Nguyen Minh Nhat</text>
<!-- cursor -->
<g transform="translate(644 451)">
<path d="M3 2L3 11L5.3 9L7 12.5L8.6 11.8L7 8.4L10 8.2Z" fill="#222" stroke="#eee" stroke-width=".7"/>
<path d="M0 4H3M4.5 0V2.5M8 1L6.5 3M1 1L2.5 2.7" stroke="#444" stroke-width=".9"/>
</g>
</svg>
</div>

<div id="notes"><div class="abs" style="left:5.500px;top:6px;color:#e8e8e8;font-size:9.300px;line-height:11px;white-space:nowrap;-webkit-text-stroke:.25px #e8e8e8">Click to add notes</div></div>

<div id="status">
<div class="st" style="left:17.500px">Slide 1 of 34</div>
<div class="st" style="left:80.500px">English</div>
<svg class="abs" style="left:122px;top:2.500px" width="12" height="12" viewBox="0 0 12 12" fill="none" stroke="#c9c9c9" stroke-width="1" stroke-linecap="round"><circle cx="5.500" cy="2" r="1.100"/><path d="M1.500 4.300H9.500M5.500 4.300V7M5.500 7L3.300 10.800M5.500 7L7.500 9"/><path d="M8 8.500L11 11.500M11 8.500L8 11.500" stroke-width=".9"/></svg>
<div class="st" style="left:135.500px">Accessibility: Investigate</div>
<svg class="abs" style="left:629px;top:3px" width="12" height="11" viewBox="0 0 12 11" fill="none" stroke="#c9c9c9" stroke-width="1.100" stroke-linecap="round"><path d="M1 4.500H10M1 7H10M1 9.500H7M5.500 .8L3.800 2.600H7.200Z"/></svg>
<div class="st" style="left:642px">Notes</div>
<svg class="abs" style="left:678.500px;top:3.500px" width="11" height="10" viewBox="0 0 11 10"><path d="M1 .8H10V7H5L2.800 9.200V7H1Z" fill="#e0e0e0"/></svg>
<div class="st" style="left:691px">Comments</div>
<div class="abs" style="left:743.500px;top:0;width:23px;height:16px;background:#4b4b4b"></div>
<svg class="abs" style="left:740px;top:0" width="268" height="16" viewBox="745 631 268 16" fill="none" stroke="#dedede" stroke-width="1.100" stroke-linecap="round">
<rect x="754.300" y="634" width="10" height="9.500"/><path d="M754.300 640.500H764.300" /><rect x="756" y="635.800" width="4" height="2.700" fill="#dedede" stroke="none"/>
<g fill="#dedede" stroke="none"><rect x="779.500" y="634.500" width="4.300" height="3.400"/><rect x="785.300" y="634.500" width="4.300" height="3.400"/><rect x="779.500" y="639.600" width="4.300" height="3.400"/><rect x="785.300" y="639.600" width="4.300" height="3.400"/></g>
<path d="M804 634.500H808.500V643H804ZM808.500 634.500H813V643H808.500Z" stroke-width="1"/>
<rect x="829.300" y="634.500" width="10" height="6"/><path d="M834.300 640.500V643.500M832 643.500H836.600"/>
<path d="M852.500 639H857.500" stroke-width="1.400"/>
<path d="M863 639H932" stroke="#7a7a7a" stroke-width="2.200"/>
<circle cx="888.200" cy="639" r="5.300" fill="#c8c8c8" stroke="none"/>
<path d="M937.500 639H943.500M940.500 636V642" stroke-width="1.400"/>
<path d="M987.500 634.500H995.500V643.500H987.500Z" stroke-width="1"/><path d="M989.500 637.500L988.500 636.500M993.500 637.500L994.500 636.500M989.500 640.500L988.500 641.500M993.500 640.500L994.500 641.500" stroke-width="1.200"/><rect x="990" y="637.800" width="3" height="2.600" fill="#dedede" stroke="none"/>
</svg>
<div class="st" style="left:950px">71%</div>
</div>

</div>
<!-- video tiles -->
<div class="abs" style="left:1081.200px;top:79px;width:140.500px;height:82.500px;background:#eaf070"></div><div class="abs" style="left:1083px;top:81px;width:137px;height:78.500px;background:#86d63e"></div>
<div class="tile" style="left:1085.200px;top:83.500px;width:132.500px;height:74px">
<svg class="abs" style="left:0;top:0" width="134" height="75" viewBox="0 0 134 75">
<defs><radialGradient id="nb" cx=".35" cy=".45" r=".8"><stop offset="0" stop-color="#0f1831"/><stop offset="1" stop-color="#060912"/></radialGradient>
<filter id="bl"><feGaussianBlur stdDeviation="1.200"/></filter></defs>
<rect width="134" height="75" fill="url(#nb)"/>
<rect x="27" y="4.500" width="29" height="5.500" rx="2.700" fill="#f2f2f2"/><rect x="65" y="4.500" width="39" height="5.500" rx="2.700" fill="#f2f2f2"/>
<rect x="31" y="6" width="6" height="2.500" fill="#c33"/><rect x="40" y="6" width="3" height="2.500" fill="#c33"/><rect x="46" y="6" width="5" height="2.500" fill="#37a"/><rect x="69" y="6.500" width="30" height="1.600" fill="#456"/>
<g filter="url(#bl)">
<path d="M96 75C98 66 104 63 112 62C122 63 128 68 130 75Z" fill="#8e8e92"/>
<ellipse cx="76" cy="43" rx="21" ry="28" fill="#c8917d"/>
<path d="M55.500 37C54 22 62 14.500 76 14.500C90 14.500 98 22 96.500 37C93.500 28.500 87 25.500 76 25.500C65 25.500 58.500 28.500 55.500 37Z" fill="#70746e"/>

<ellipse cx="67" cy="44" rx="3.500" ry="1" fill="#6a4038"/><ellipse cx="85" cy="44" rx="3.500" ry="1" fill="#6a4038"/>
</g>
<text x="100" y="49" font-family="'Liberation Sans',sans-serif" font-size="2.600" font-weight="bold" fill="#dfe6ff">DTU START UP</text>
<text x="104" y="53" font-family="'Liberation Sans',sans-serif" font-size="2.400" fill="#e8b14a">TRAINING</text>
<text x="108" y="57.500" font-family="'Liberation Sans',sans-serif" font-size="3" font-weight="bold" fill="#dfe6ff">2024</text>
<rect x="0" y="58.500" width="108" height="16" fill="rgba(34,34,40,.62)"/>
</svg>
<div class="abs" style="left:3px;top:59.500px;color:#f4f4f4;font-size:10.400px;line-height:15px;white-space:nowrap">NHAT NGUYEN MINH</div>
</div>
<div class="tile" style="top:163.5px;background:#222224">
<svg class="abs" style="left:33px;top:3.300px" width="66.400" height="66.400" viewBox="0 0 66.400 66.400">
<defs><linearGradient id="sky" x1="0" y1="0" x2="0" y2="1"><stop offset="0" stop-color="#d6e6f0"/><stop offset=".5" stop-color="#e8f1f4"/><stop offset="1" stop-color="#c9dcd8"/></linearGradient><filter id="b2" x="-5%" y="-5%" width="110%" height="110%"><feGaussianBlur stdDeviation=".600"/></filter>
<linearGradient id="mtl" x1="0" y1="0" x2="1" y2="1"><stop offset="0" stop-color="#3d9a55"/><stop offset=".5" stop-color="#2f8f3f"/><stop offset="1" stop-color="#3fa245"/></linearGradient></defs>
<rect width="66.400" height="66.400" fill="url(#sky)"/>
<g filter="url(#b2)">
<path d="M28 20L36 13L43 8L47 12L52 22L56 30L30 34Z" fill="#9dbab8"/>
<path d="M46 34L52 26L58 17L63 13L66.400 15V40H46Z" fill="#55a387"/>
<path d="M0 0H7L14 7L22 14L31 17L40 20L45 26L48 32L52 37H0Z" fill="url(#mtl)"/>
<path d="M0 8L6 14L10 24L8 34H0Z" fill="#2a7f45" opacity=".7"/>
<rect x="0" y="34" width="66.400" height="5" fill="#4aa03a"/>
<rect x="0" y="38" width="66.400" height="10" fill="#c3cf33"/>
<rect x="0" y="43" width="66.400" height="4" fill="#a9c935"/>
<rect x="0" y="46.800" width="66.400" height="2.400" fill="#5f9c30"/>
<rect x="0" y="49" width="66.400" height="10" fill="#7ec83c"/>
<rect x="1" y="49.500" width="14" height="2" fill="#e6f0d8"/>
<ellipse cx="4" cy="51.500" rx="2" ry="1" fill="#2e5a28"/><ellipse cx="11" cy="51.500" rx="2" ry="1" fill="#2e5a28"/><ellipse cx="22" cy="53.500" rx="3" ry="1.200" fill="#3a6a2a"/>
<rect x="0" y="57" width="66.400" height="9.400" fill="#66b035"/>
<rect x="48" y="55.500" width="18.400" height="2" fill="#dcecc0"/>
<rect x="58" y="36" width="3.500" height="2.600" fill="#eef4ee"/>
</g>
</svg>
<div class="nm">Khoi Nguyen</div><svg class="abs mic" style="left:3.200px;top:59.800px" width="11" height="14" viewBox="0 0 11 14"><rect x="3.700" y="1" width="3.600" height="7" rx="1.800" fill="#e0413a"/><path d="M1.800 6.500A3.700 3.700 0 0 0 9.200 6.500M5.500 10.300V12.500M3.500 12.700H7.500" stroke="#e0413a" stroke-width="1.100" fill="none"/><path d="M9.500 1L1.500 12.500" stroke="#e0413a" stroke-width="1.200"/></svg>
</div>
<div class="tile" style="top:243.5px">
<svg class="abs" style="left:0;top:0" width="133" height="75" viewBox="0 0 133 75">
<rect width="133" height="75" fill="url(#nb)"/>
<circle cx="20" cy="22" r=".8" fill="#c44"/><circle cx="128" cy="53" r="1" fill="#e66"/><path d="M12 30L30 14M40 50L70 30M90 20L120 40" stroke="#1c2c5c" stroke-width=".6"/>
<rect x="27" y="4.500" width="29" height="5.500" rx="2.700" fill="#f2f2f2"/><rect x="65" y="4.500" width="39" height="5.500" rx="2.700" fill="#f2f2f2"/>
<rect x="31" y="6" width="6" height="2.500" fill="#c33"/><rect x="40" y="6" width="3" height="2.500" fill="#c33"/><rect x="46" y="6" width="5" height="2.500" fill="#37a"/><rect x="69" y="6.500" width="30" height="1.600" fill="#456"/>
<g filter="url(#bl)"><path d="M60 62C60 48 66 42 75 42C84 42 90 48 90 62Z" fill="#17151a"/><ellipse cx="75" cy="56" rx="9" ry="9" fill="#b98a78"/><path d="M65 54C66 47 70 45 75 45C80 45 84 47 85 54C81 50 69 50 65 54Z" fill="#17151a"/></g>
<text x="108" y="57" font-family="'Liberation Sans',sans-serif" font-size="2.600" font-weight="bold" fill="#dfe6ff">DTU START UP</text>
</svg>
<div class="nm" style="letter-spacing:-.21px;width:131px">Dreamers - Phạm Thị T...</div><svg class="abs mic" style="left:3.200px;top:59.800px" width="11" height="14" viewBox="0 0 11 14"><rect x="3.700" y="1" width="3.600" height="7" rx="1.800" fill="#e0413a"/><path d="M1.800 6.500A3.700 3.700 0 0 0 9.200 6.500M5.500 10.300V12.500M3.500 12.700H7.500" stroke="#e0413a" stroke-width="1.100" fill="none"/><path d="M9.500 1L1.500 12.500" stroke="#e0413a" stroke-width="1.200"/></svg>
</div>
<div class="tile" style="top:323.5px">
<svg class="abs" style="left:0;top:0" width="133" height="75" viewBox="0 0 133 75">
<rect width="133" height="75" fill="url(#nb)"/>
<circle cx="20" cy="22" r=".8" fill="#c44"/><circle cx="128" cy="53" r="1" fill="#e66"/><path d="M12 30L30 14M40 50L70 30M90 20L120 40" stroke="#1c2c5c" stroke-width=".6"/>
<rect x="27" y="4.500" width="29" height="5.500" rx="2.700" fill="#f2f2f2"/><rect x="65" y="4.500" width="39" height="5.500" rx="2.700" fill="#f2f2f2"/>
<rect x="31" y="6" width="6" height="2.500" fill="#c33"/><rect x="40" y="6" width="3" height="2.500" fill="#c33"/><rect x="46" y="6" width="5" height="2.500" fill="#37a"/><rect x="69" y="6.500" width="30" height="1.600" fill="#456"/>

<text x="108" y="57" font-family="'Liberation Sans',sans-serif" font-size="2.600" font-weight="bold" fill="#dfe6ff">DTU START UP</text>
</svg>
<div class="nm" style="width:131px">Dreamers_Nguyễn Ph...</div><svg class="abs mic" style="left:3.200px;top:59.800px" width="11" height="14" viewBox="0 0 11 14"><rect x="3.700" y="1" width="3.600" height="7" rx="1.800" fill="#e0413a"/><path d="M1.800 6.500A3.700 3.700 0 0 0 9.200 6.500M5.500 10.300V12.500M3.500 12.700H7.500" stroke="#e0413a" stroke-width="1.100" fill="none"/><path d="M9.500 1L1.500 12.500" stroke="#e0413a" stroke-width="1.200"/></svg>
</div>
<div class="tile" style="top:403.5px">
<svg class="abs" style="left:0;top:0" width="133" height="75" viewBox="0 0 133 75">
<rect width="133" height="75" fill="url(#nb)"/>
<circle cx="20" cy="22" r=".8" fill="#c44"/><circle cx="128" cy="53" r="1" fill="#e66"/><path d="M12 30L30 14M40 50L70 30M90 20L120 40" stroke="#1c2c5c" stroke-width=".6"/>
<rect x="27" y="4.500" width="29" height="5.500" rx="2.700" fill="#f2f2f2"/><rect x="65" y="4.500" width="39" height="5.500" rx="2.700" fill="#f2f2f2"/>
<rect x="31" y="6" width="6" height="2.500" fill="#c33"/><rect x="40" y="6" width="3" height="2.500" fill="#c33"/><rect x="46" y="6" width="5" height="2.500" fill="#37a"/><rect x="69" y="6.500" width="30" height="1.600" fill="#456"/>
<g filter="url(#bl)"><path d="M48 75C46 52 50 24 57 18C64 12 86 12 92 20C98 28 100 52 98 75Z" fill="#352a28"/><ellipse cx="73" cy="42" rx="13.500" ry="17" fill="#cfa18c"/><path d="M58 38C59 23 67 19 74 19C83 19 89 25 89 38C83 29 65 29 58 38Z" fill="#352a28"/><path d="M62 40H72M78 40H88" stroke="#4a3a35" stroke-width="1"/><rect x="62" y="38" width="10" height="6" rx="2" fill="none" stroke="#6a5a55" stroke-width=".8"/><rect x="77" y="38" width="10" height="6" rx="2" fill="none" stroke="#6a5a55" stroke-width=".8"/><path d="M58 62H92L98 75H52Z" fill="#4a3030"/><rect x="68" y="52" width="12" height="10" fill="#222"/></g>
<text x="108" y="57" font-family="'Liberation Sans',sans-serif" font-size="2.600" font-weight="bold" fill="#dfe6ff">DTU START UP</text>
</svg>
<div class="nm">Nhung Đặng</div><svg class="abs mic" style="left:3.200px;top:59.800px" width="11" height="14" viewBox="0 0 11 14"><rect x="3.700" y="1" width="3.600" height="7" rx="1.800" fill="#e0413a"/><path d="M1.800 6.500A3.700 3.700 0 0 0 9.200 6.500M5.500 10.300V12.500M3.500 12.700H7.500" stroke="#e0413a" stroke-width="1.100" fill="none"/><path d="M9.500 1L1.500 12.500" stroke="#e0413a" stroke-width="1.200"/></svg>
</div>
<div class="tile" style="top:483.5px">
<svg class="abs" style="left:0;top:0" width="133" height="75" viewBox="0 0 133 75">
<rect width="133" height="75" fill="url(#nb)"/>
<circle cx="20" cy="22" r=".8" fill="#c44"/><circle cx="128" cy="53" r="1" fill="#e66"/><path d="M12 30L30 14M40 50L70 30M90 20L120 40" stroke="#1c2c5c" stroke-width=".6"/>
<rect x="27" y="4.500" width="29" height="5.500" rx="2.700" fill="#f2f2f2"/><rect x="65" y="4.500" width="39" height="5.500" rx="2.700" fill="#f2f2f2"/>
<rect x="31" y="6" width="6" height="2.500" fill="#c33"/><rect x="40" y="6" width="3" height="2.500" fill="#c33"/><rect x="46" y="6" width="5" height="2.500" fill="#37a"/><rect x="69" y="6.500" width="30" height="1.600" fill="#456"/>

<text x="108" y="57" font-family="'Liberation Sans',sans-serif" font-size="2.600" font-weight="bold" fill="#dfe6ff">DTU START UP</text>
</svg>
<div class="nm" style="letter-spacing:-.1px;width:131px">Chuỗi sản phẩm hỗ tr...</div><svg class="abs mic" style="left:3.200px;top:59.800px" width="11" height="14" viewBox="0 0 11 14"><rect x="3.700" y="1" width="3.600" height="7" rx="1.800" fill="#e0413a"/><path d="M1.800 6.500A3.700 3.700 0 0 0 9.200 6.500M5.500 10.300V12.500M3.500 12.700H7.500" stroke="#e0413a" stroke-width="1.100" fill="none"/><path d="M9.500 1L1.500 12.500" stroke="#e0413a" stroke-width="1.200"/></svg>
</div>
<div class="tile" style="top:563.5px">
<svg class="abs" style="left:0;top:0" width="133" height="75" viewBox="0 0 133 75">
<rect width="133" height="75" fill="url(#nb)"/>
<circle cx="20" cy="22" r=".8" fill="#c44"/><circle cx="128" cy="53" r="1" fill="#e66"/><path d="M12 30L30 14M40 50L70 30M90 20L120 40" stroke="#1c2c5c" stroke-width=".6"/>
<rect x="27" y="4.500" width="29" height="5.500" rx="2.700" fill="#f2f2f2"/><rect x="65" y="4.500" width="39" height="5.500" rx="2.700" fill="#f2f2f2"/>
<rect x="31" y="6" width="6" height="2.500" fill="#c33"/><rect x="40" y="6" width="3" height="2.500" fill="#c33"/><rect x="46" y="6" width="5" height="2.500" fill="#37a"/><rect x="69" y="6.500" width="30" height="1.600" fill="#456"/>

<text x="108" y="57" font-family="'Liberation Sans',sans-serif" font-size="2.600" font-weight="bold" fill="#dfe6ff">DTU START UP</text>
</svg>
<div class="nm" style="letter-spacing:-.32px;width:131px">Dreamers_Trương Thị ...</div><svg class="abs mic" style="left:3.200px;top:59.800px" width="11" height="14" viewBox="0 0 11 14"><rect x="3.700" y="1" width="3.600" height="7" rx="1.800" fill="#e0413a"/><path d="M1.800 6.500A3.700 3.700 0 0 0 9.200 6.500M5.500 10.300V12.500M3.500 12.700H7.500" stroke="#e0413a" stroke-width="1.100" fill="none"/><path d="M9.500 1L1.500 12.500" stroke="#e0413a" stroke-width="1.200"/></svg>
</div>

</div>
</body>
</html>
